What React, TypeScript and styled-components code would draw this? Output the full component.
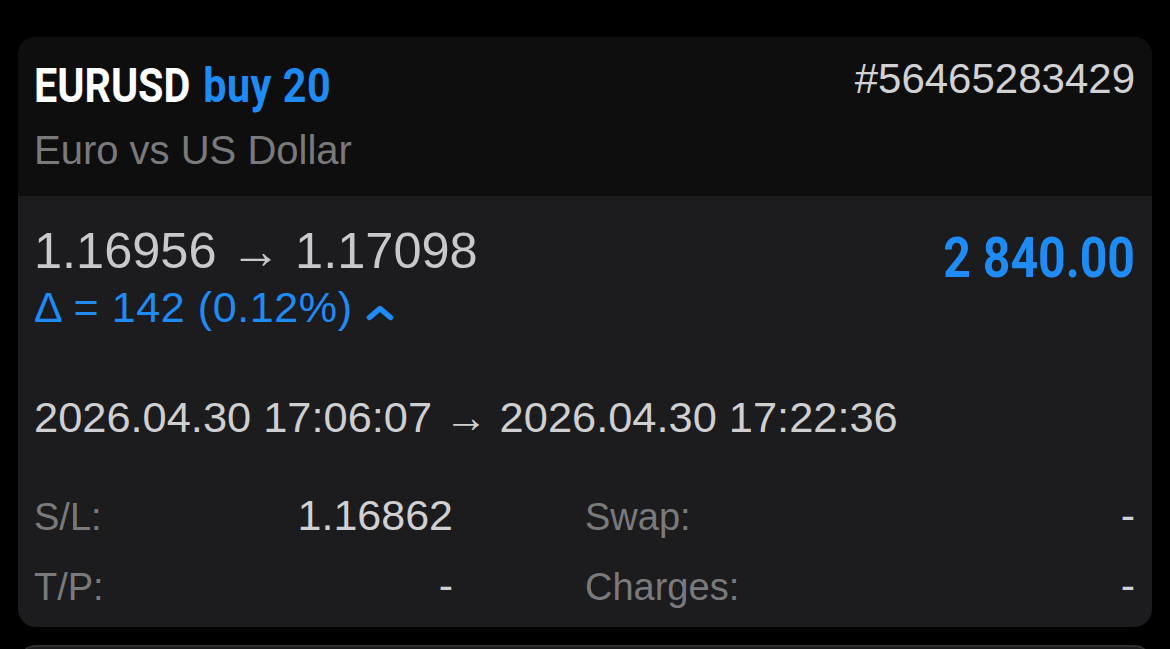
import styled, { createGlobalStyle } from 'styled-components';

const GlobalStyle = createGlobalStyle`
  html, body {
    margin: 0;
    background: #000;
  }
  body {
    font-family: "Liberation Sans", Arial, sans-serif;
    -webkit-font-smoothing: antialiased;
  }
`;

type Detail = { label: string; value: string };

const details: Detail[][] = [
  [
    { label: 'S/L:', value: '1.16862' },
    { label: 'Swap:', value: '-' },
  ],
  [
    { label: 'T/P:', value: '-' },
    { label: 'Charges:', value: '-' },
  ],
];

export default function App() {
  return (
    <StyledPage>
      <GlobalStyle />
      <StyledCard>
        <StyledHeader>
          <div>
            <StyledTitle>
              <StyledCondensed $scale={0.86}>
                EURUSD<StyledBlue>buy 20</StyledBlue>
              </StyledCondensed>
            </StyledTitle>
            <StyledSubtitle>Euro vs US Dollar</StyledSubtitle>
          </div>
          <StyledTicket>#56465283429</StyledTicket>
        </StyledHeader>

        <StyledBody>
          <StyledTopRow>
            <div>
              <StyledPrices>1.16956 → 1.17098</StyledPrices>
              <StyledDelta>
                Δ = 142 (0.12%)
                <StyledChevron viewBox="0 0 28 16">
                  <polyline points="3.5,12.5 14,3.5 24.5,12.5" />
                </StyledChevron>
              </StyledDelta>
            </div>
            <StyledProfit>
              <StyledCondensed $scale={0.86} $origin="right">
                2 840.00
              </StyledCondensed>
            </StyledProfit>
          </StyledTopRow>

          <StyledDates>2026.04.30 17:06:07 → 2026.04.30 17:22:36</StyledDates>

          <StyledDetails>
            {details.map((row, i) =>
              row.map((cell, j) => (
                <StyledDetailPair key={`${i}-${j}`}>
                  <StyledLabel>{cell.label}</StyledLabel>
                  <StyledValue>{cell.value}</StyledValue>
                </StyledDetailPair>
              )),
            )}
          </StyledDetails>
        </StyledBody>
      </StyledCard>
      <StyledNextCard />
    </StyledPage>
  );
}

const StyledPage = styled.div`
  height: 649px;
  box-sizing: border-box;
  padding: 37px 18px 0;
  overflow: hidden;
  background: #000;
`;

const StyledCard = styled.div`
  background: #1c1c1e;
  border-radius: 18px;
  overflow: hidden;
`;

const StyledHeader = styled.div`
  display: flex;
  justify-content: space-between;
  align-items: flex-start;
  padding: 21px 17px 22px 16px;
  background: #0e0e0f;
`;

const StyledTitle = styled.div`
  height: 56px;
  line-height: 56px;
  font-family: Roboto, "Liberation Sans", sans-serif;
  font-weight: 700;
  font-size: 48px;
  color: #ffffff;
  white-space: nowrap;
`;

const StyledCondensed = styled.span<{ $scale: number; $origin?: 'left' | 'right' }>`
  display: inline-block;
  transform: scaleX(${(p) => p.$scale});
  transform-origin: ${(p) => p.$origin ?? 'left'} center;
`;

const StyledBlue = styled.span`
  margin-left: 15px;
  letter-spacing: 0.6px;
  color: #1f8bf4;
`;

const StyledSubtitle = styled.div`
  margin-top: 12px;
  font-size: 40px;
  line-height: 48px;
  color: #7a7a7c;
`;

const StyledTicket = styled.div`
  margin-top: -2px;
  font-size: 42px;
  line-height: 46px;
  color: #d2d2d4;
`;

const StyledBody = styled.div`
  padding: 27px 17px 12px 16px;
`;

const StyledTopRow = styled.div`
  display: flex;
  justify-content: space-between;
  align-items: flex-start;
`;

const StyledPrices = styled.div`
  font-size: 50.5px;
  line-height: 56px;
  color: #c9c9cb;
  white-space: nowrap;
`;

const StyledDelta = styled.div`
  display: flex;
  align-items: center;
  gap: 13px;
  margin-top: 4px;
  font-size: 43px;
  letter-spacing: 0.6px;
  line-height: 48px;
  color: #1f8bf4;
  white-space: nowrap;
`;

const StyledChevron = styled.svg`
  width: 28px;
  height: 16px;
  margin-top: 12px;
  fill: none;
  stroke: #1f8bf4;
  stroke-width: 5.5;
  stroke-linecap: round;
  stroke-linejoin: round;
`;

const StyledProfit = styled.div`
  margin-top: 3px;
  font-family: Roboto, "Liberation Sans", sans-serif;
  font-weight: 700;
  font-size: 56px;
  line-height: 64px;
  color: #1f8bf4;
  white-space: nowrap;
`;

const StyledDates = styled.div`
  margin-top: 62px;
  font-size: 43.4px;
  line-height: 48px;
  color: #cfcfd1;
  white-space: nowrap;
`;

const StyledDetails = styled.div`
  display: grid;
  grid-template-columns: 419px 1fr;
  column-gap: 132px;
  row-gap: 12px;
  margin-top: 46px;
`;

const StyledDetailPair = styled.div`
  display: flex;
  justify-content: space-between;
  align-items: baseline;
  line-height: 56px;
`;

const StyledLabel = styled.span`
  font-size: 38px;
  color: #7a7a7c;
`;

const StyledValue = styled.span`
  font-size: 43px;
  color: #d0d0d2;
`;

const StyledNextCard = styled.div`
  height: 60px;
  margin-top: 18px;
  border-radius: 18px;
  border-top: 2px solid #303033;
  background: #1c1c1e;
`;
